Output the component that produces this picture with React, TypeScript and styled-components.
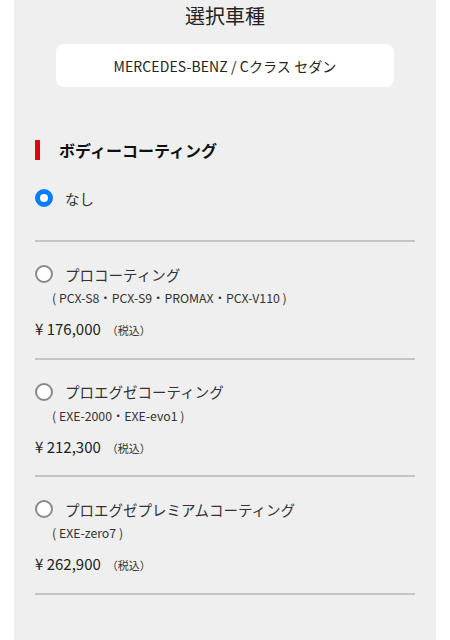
import React from "react";
import styled, { createGlobalStyle } from "styled-components";

const Global = createGlobalStyle`
  html, body { margin: 0; padding: 0; background: #ffffff; }
  body { font-family: "Noto Sans CJK JP", "Noto Sans", sans-serif; color: #222; }
  * { box-sizing: border-box; }
`;

const Panel = styled.div`
  margin: 0 14px;
  min-height: 640px;
  background: #efefef;
  padding: 4px 21px 40px;
`;

const Title = styled.h2`
  margin: 0;
  font-size: 20px;
  line-height: 24px;
  font-weight: 400;
  text-align: center;
  color: #222;
`;

const CarBox = styled.div`
  margin: 16px auto 0;
  width: 338px;
  height: 43px;
  background: #fff;
  border-radius: 8px;
  display: flex;
  align-items: center;
  justify-content: center;
  font-size: 14px;
  letter-spacing: 0.1px;
  color: #222;
`;

const Heading = styled.div`
  margin-top: 53px;
  height: 20px;
  display: flex;
  align-items: center;
  gap: 19px;
  font-size: 16px;
  font-weight: 700;
  color: #111;
  &::before {
    content: "";
    width: 5px;
    height: 20px;
    background: #e60012;
  }
`;

const Option = styled.div<{ $first?: boolean }>`
  padding-top: ${(p) => (p.$first ? "26px" : "20px")};
  padding-bottom: ${(p) => (p.$first ? "30px" : "16.6px")};
  border-bottom: 2px solid #c4c4c4;
`;

const RadioRow = styled.label`
  display: flex;
  align-items: center;
  gap: 12px;
  height: 24px;
  font-size: 14.5px;
  color: #333;
`;

const Radio = styled.span<{ $checked?: boolean }>`
  width: 18px;
  height: 18px;
  border-radius: 50%;
  flex: none;
  background: #fff;
  border: ${(p) => (p.$checked ? "5px solid #0a7cff" : "2px solid #8a8a8a")};
`;

const Sub = styled.div`
  margin-top: 3px;
  padding-left: 17px;
  font-size: 12.3px;
  line-height: 18px;
  color: #333;
`;

const Price = styled.div`
  margin-top: 11px;
  font-size: 15px;
  line-height: 22px;
  color: #222;
  display: flex;
  align-items: baseline;
`;

const Tax = styled.span`
  font-size: 11px;
  margin-left: 6px;
  color: #333;
`;

const options = [
  { name: "プロコーティング", sub: "( PCX-S8・PCX-S9・PROMAX・PCX-V110 )", price: "176,000" },
  { name: "プロエグゼコーティング", sub: "( EXE-2000・EXE-evo1 )", price: "212,300" },
  { name: "プロエグゼプレミアムコーティング", sub: "( EXE-zero7 )", price: "262,900" },
];

export default function App() {
  return (
    <>
      <Global />
      <Panel>
        <Title>選択車種</Title>
        <CarBox>MERCEDES-BENZ / Cクラス セダン</CarBox>
        <Heading>ボディーコーティング</Heading>
        <Option $first>
          <RadioRow>
            <Radio $checked />
            なし
          </RadioRow>
        </Option>
        {options.map((o) => (
          <Option key={o.name}>
            <RadioRow>
              <Radio />
              {o.name}
            </RadioRow>
            <Sub>{o.sub}</Sub>
            <Price>
              ¥ {o.price}
              <Tax>（税込）</Tax>
            </Price>
          </Option>
        ))}
      </Panel>
    </>
  );
}
